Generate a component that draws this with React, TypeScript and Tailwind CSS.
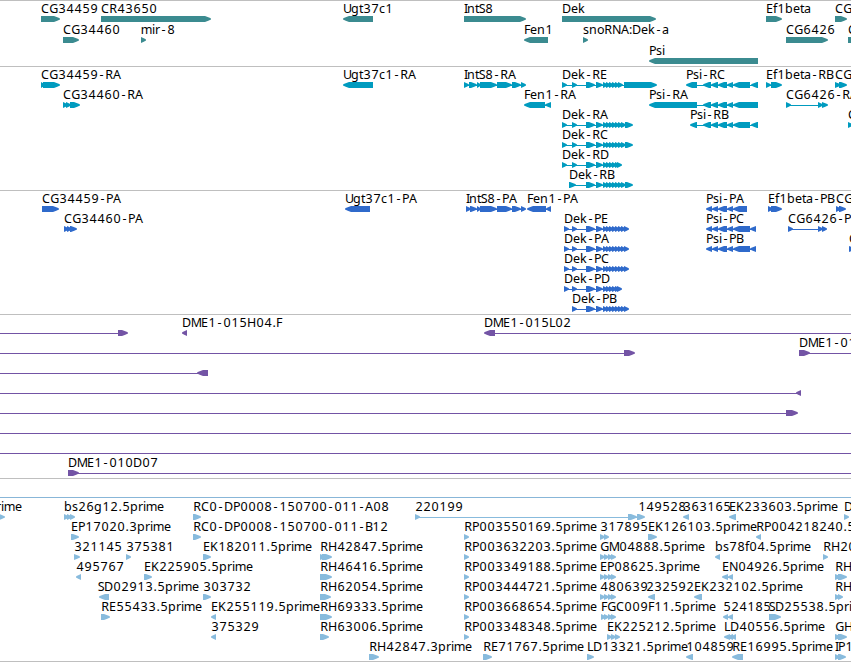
type Dir = "R" | "L";

interface Feature {
    row: number;
    x: number;
    label?: string;
    dir?: Dir;
    blocks?: number[][];
    line?: number[];
}

// horizontal advance of each glyph in px, 8 when not listed
const ADVANCE: Record<string, number> = {
    G: 9, D: 9, N: 9, H: 9, M: 10, E: 7, P: 7, B: 7, S: 6, F: 6, L: 6, I: 3,
    e: 7, k: 7, a: 7, o: 7, s: 6, c: 6, t: 4, f: 4, r: 5, i: 3, m: 11,
    "-": 7, ".": 4, ":": 3,
};

const BEARING: Record<string, number> = {
    "-": 1.5, S: -0.3, ".": 0.5, R: 0.3, M: -0.3, m: -0.3, G: 0.2,
};

function glyphPositions(text: string, start: number) {
    let x = start;
    return text.split("").map((char) => {
        const bearing = BEARING[char] ?? (/\d/.test(char) ? 0.5 : 0);
        const current = x + bearing;
        x += ADVANCE[char] ?? 8;
        return current;
    });
}

function f(row: number, label: string, dir: Dir, blocks: number[][], x = blocks[0][0]): Feature {
    return { row, label, dir, blocks, x };
}

const dekMiddle = [[586, 595], [596, 603], [603, 608], [606, 611], [609, 614], [612, 617], [615, 620]];
const dekLong = [...dekMiddle, [618, 623], [621, 626], [625, 633]];
const dekShort = [...dekMiddle, [617, 622]];
const dekProtein = [...dekMiddle, [618, 623], [621, 626], [624, 629]];
const psiMiddle = [[703, 711], [711, 718], [718, 727], [727, 733]];
const psiProtein = [[706, 712], [712, 718], [718, 727], [727, 733]];

const genes: Feature[] = [
    f(0, "CG34459", "R", [[41, 60]]),
    f(0, "CR43650", "R", [[101, 211]]),
    f(0, "Ugt37c1", "L", [[343, 373]]),
    f(0, "IntS8", "R", [[464, 526]]),
    f(0, "Dek", "R", [[562, 656]]),
    f(0, "Ef1beta", "R", [[766, 782]]),
    f(0, "CG", "R", [[835, 847]]),
    f(1, "CG34460", "R", [[63, 79]]),
    f(1, "mir-8", "R", [[141, 146]]),
    f(1, "Fen1", "L", [[524, 548]]),
    f(1, "snoRNA:Dek-a", "R", [[583, 588]]),
    f(1, "CG6426", "R", [[786, 828]]),
    f(1, "C", "R", [[848, 860]]),
    f(2, "Psi", "L", [[649, 758]]),
];

const transcripts: Feature[] = [
    f(0, "CG34459-RA", "R", [[41, 45], [43, 60]]),
    f(0, "Ugt37c1-RA", "L", [[343, 373]]),
    f(0, "IntS8-RA", "R", [[464, 469], [469, 477], [477, 481], [480, 497], [497, 512], [512, 521], [521, 526]]),
    f(0, "Dek-RE", "R", [[562, 567], [572, 577], ...dekMiddle, [618, 623], [624, 657]]),
    f(0, "Psi-RC", "L", [[686, 697], ...psiMiddle, [733, 750], [751, 758]]),
    f(0, "Ef1beta-RB", "R", [[766, 771], [771, 782]]),
    f(0, "CG", "R", [[835, 841], [839, 847]]),
    f(1, "CG34460-RA", "R", [[63, 68], [66, 71], [70, 80]]),
    f(1, "Fen1-RA", "L", [[524, 545], [545, 551]]),
    f(1, "Psi-RA", "L", [[649, 697], ...psiMiddle, [733, 758]]),
    f(1, "CG6426-RA", "R", [[786, 791], [818, 823], [822, 828]]),
    f(2, "Dek-RA", "R", [[562, 567], [572, 577], ...dekLong]),
    f(2, "Psi-RB", "L", [[690, 697], ...psiMiddle, [733, 750], [751, 758]]),
    f(2, "C", "R", [[848, 853]]),
    f(3, "Dek-RC", "R", [[562, 567], [572, 577], ...dekLong]),
    f(4, "Dek-RD", "R", [[562, 567], [572, 577], ...dekShort]),
    f(5, "Dek-RB", "R", [[569, 576], ...dekLong]),
];

const proteins: Feature[] = [
    f(0, "CG34459-PA", "R", [[42, 59]]),
    f(0, "Ugt37c1-PA", "L", [[345, 370]]),
    f(0, "IntS8-PA", "R", [[466, 471], [470, 477], [477, 481], [480, 497], [497, 512], [512, 521], [521, 526]]),
    f(0, "Fen1-PA", "L", [[527, 546], [546, 551]]),
    f(0, "Psi-PA", "L", [...psiProtein, [733, 747]]),
    f(0, "Ef1beta-PB", "R", [[768, 773], [771, 782]]),
    f(0, "CG", "R", [[836, 841], [839, 846]]),
    f(1, "CG34460-PA", "R", [[64, 69], [67, 72], [70, 77]]),
    f(1, "Dek-PE", "R", [[564, 569], [572, 577], ...dekProtein]),
    f(1, "Psi-PC", "L", [...psiProtein, [733, 750], [750, 756]]),
    f(1, "CG6426-PA", "R", [[788, 793], [818, 823], [822, 827]]),
    f(2, "Dek-PA", "R", [[564, 569], [572, 577], ...dekProtein]),
    f(2, "Psi-PB", "L", [...psiProtein, [733, 750], [750, 756]]),
    f(2, "C", "R", [[849, 854]]),
    f(3, "Dek-PC", "R", [[564, 569], [572, 577], ...dekProtein]),
    f(4, "Dek-PD", "R", [[564, 569], [572, 577], ...dekShort]),
    f(5, "Dek-PB", "R", [[572, 577], ...dekProtein]),
];

const clones: Feature[] = [
    { row: 0, x: 0, dir: "R", blocks: [[118, 128]], line: [0, 118] },
    { row: 0, x: 182, label: "DME1-015H04.F", dir: "L", blocks: [[182, 187]] },
    { row: 0, x: 484, label: "DME1-015L02", dir: "L", blocks: [[484, 495]], line: [495, 851] },
    { row: 1, x: 0, dir: "R", blocks: [[624, 635]], line: [0, 624] },
    { row: 1, x: 799, label: "DME1-01", dir: "R", blocks: [[799, 810]], line: [808, 851] },
    { row: 2, x: 0, dir: "L", blocks: [[197, 208]], line: [0, 199] },
    { row: 3, x: 0, dir: "L", blocks: [[796, 801]], line: [0, 797] },
    { row: 4, x: 0, dir: "R", blocks: [[786, 798]], line: [0, 786] },
    { row: 5, x: 0, line: [0, 851] },
    { row: 6, x: 0, line: [0, 851] },
    { row: 7, x: 68, label: "DME1-010D07", dir: "R", blocks: [[68, 79]], line: [77, 851] },
];

const chevrons = [[600, 605], [604, 609], [608, 613], [611, 616]];

const ests: Feature[] = [
    f(0, "prime", "R", [[-3, 5]], -12),
    f(0, "bs26g12.5prime", "R", [[64, 69], [67, 72], [70, 75]]),
    f(0, "RC0-DP0008-150700-011-A08", "R", [[193, 201]]),
    f(0, "220199", "R", [[415, 420], [628, 637], [637, 645]]),
    { row: 0, x: 638, label: "149528" },
    f(0, "363165", "L", [[683, 689]]),
    f(0, "EK233603.5prime", "L", [[729, 736]]),
    f(0, "D", "R", [[844, 849]]),
    f(1, "EP17020.3prime", "R", [[71, 79]]),
    f(1, "RC0-DP0008-150700-011-B12", "R", [[193, 201]]),
    f(1, "RP003550169.5prime", "R", [[464, 469]]),
    f(1, "317895", "R", [[600, 605], [604, 609]]),
    f(1, "EK126103.5prime", "R", [[648, 657]]),
    f(1, "RP004218240.5prime", "L", [[756, 761]]),
    f(2, "321145", "R", [[74, 80]]),
    f(2, "375381", "R", [[126, 131]]),
    f(2, "EK182011.5prime", "R", [[203, 211]]),
    f(2, "RH42847.5prime", "R", [[320, 326], [322, 332]]),
    f(2, "RP003632203.5prime", "R", [[464, 469]]),
    f(2, "GM04888.5prime", "R", chevrons),
    f(2, "bs78f04.5prime", "L", [[715, 720]]),
    f(2, "RH20", "R", [[823, 828]]),
    f(3, "495767", "L", [[76, 81]]),
    f(3, "EK225905.5prime", "R", [[144, 152]]),
    f(3, "RH46416.5prime", "R", [[320, 332]]),
    f(3, "RP003349188.5prime", "R", [[464, 469]]),
    f(3, "EP08625.3prime", "R", chevrons),
    f(3, "EN04926.5prime", "L", [[722, 728], [728, 733]]),
    f(3, "RH", "R", [[835, 841], [838, 847]]),
    f(4, "SD02913.5prime", "L", [[99, 109]], 98),
    f(4, "303732", "R", [[203, 211]]),
    f(4, "RH62054.5prime", "R", [[320, 331]]),
    f(4, "RP003444721.5prime", "R", [[464, 469]]),
    f(4, "480639", "R", chevrons),
    f(4, "232592", "L", [[648, 655]], 646),
    f(4, "EK232102.5prime", "L", [[694, 702]]),
    f(4, "RH", "R", [[835, 840], [838, 843]]),
    f(5, "RE55433.5prime", "R", [[101, 110]]),
    f(5, "EK255119.5prime", "L", [[211, 216]]),
    f(5, "RH69333.5prime", "R", [[320, 332]]),
    f(5, "RP003668654.5prime", "R", [[464, 469]]),
    f(5, "FGC009F11.5prime", "R", [[601, 606], [604, 609], [608, 613], [611, 616]]),
    f(5, "524185", "L", [[723, 728], [728, 733]]),
    f(5, "SD25538.5prime", "R", [[769, 781]]),
    f(6, "375329", "L", [[211, 216]]),
    f(6, "RH63006.5prime", "R", [[320, 329]]),
    f(6, "RP003348348.5prime", "R", [[464, 469]]),
    f(6, "EK225212.5prime", "R", [[607, 612], [611, 616], [615, 620]]),
    f(6, "LD40556.5prime", "L", [[724, 730], [727, 733], [731, 736]]),
    f(6, "GH", "R", [[835, 841], [838, 847]]),
    f(7, "RH42847.3prime", "R", [[369, 379]]),
    f(7, "RE71767.5prime", "R", [[483, 492]]),
    f(7, "LD13321.5prime", "R", [[587, 594]]),
    f(7, "104859", "L", [[686, 693]]),
    f(7, "RE16995.5prime", "L", [[732, 743]]),
    f(7, "IP1", "R", [[835, 840], [838, 846]]),
];

function arrowPoints(start: number, end: number, top: number, dir: Dir) {
    const head = Math.min(6, end - start);
    const tip = dir === "R" ? end : start;
    const tail = dir === "R" ? start : end;
    const sign = dir === "R" ? -1 : 1;
    const neck = tip + sign * head;
    const bulge = tip + sign * head * 0.45;
    return [
        [tail, top], [neck, top], [bulge, top + 1.2], [tip, top + 2.5],
        [tip, top + 3.5], [bulge, top + 4.8], [neck, top + 6], [tail, top + 6],
    ].map((point) => point.join(",")).join(" ");
}

interface TrackProps {
    features: Feature[];
    height: number;
    pitch?: number;
    offset?: number;
    color: string;
    border?: string;
}

function Track({ features, height, pitch = 20, offset = 0, color, border = "border-[#bfbfbf]" }: TrackProps) {
    // the border takes the first pixel of the section
    const inner = height - 1;
    return (
        <section className={`w-full border-t ${border}`}>
            <svg className={`block overflow-hidden ${color}`} width="851" height={inner} viewBox={`0 ${1 - offset} 851 ${inner}`}>
                {features.map(({ row, x, label, dir = "R", blocks = [], line }, index) => {
                    const top = row * pitch + 16;
                    const span = line ?? (blocks.length > 1 ? [blocks[0][0] + 3, blocks[blocks.length - 1][1] - 3] : null);
                    return (
                        <g key={index}>
                            {span && <rect x={span[0]} y={top + 3} width={span[1] - span[0]} height="1" fill="currentColor"/>}
                            {blocks.map(([start, end]) => (
                                <polygon key={start} points={arrowPoints(start, end, top, dir)} fill="currentColor"/>
                            ))}
                            {label && (
                                <text x={glyphPositions(label, x).join(" ")} y={row * pitch + 13} className="fill-black">{label}</text>
                            )}
                        </g>
                    );
                })}
            </svg>
        </section>
    );
}

export default function App() {
    return (
        <main className="flex flex-col w-[851px] h-[662px] overflow-hidden bg-white text-[12.5px] font-['Noto_Sans',sans-serif]">
            <Track features={genes} height={66} pitch={21} color="text-[#3b8b90]"/>
            <Track features={transcripts} height={124} color="text-[#009bbf]"/>
            <Track features={proteins} height={124} color="text-[#2f6acb]"/>
            <Track features={clones} height={164} color="text-[#7354a5]"/>
            <div className="h-[19px] border-t border-[#bfbfbf]"></div>
            <div className="border-b border-[#bfbfbf]">
                <Track features={ests} height={164} offset={1} color="text-[#88bbdd]" border="border-[#88b6d8]"/>
            </div>
        </main>
    );
}
